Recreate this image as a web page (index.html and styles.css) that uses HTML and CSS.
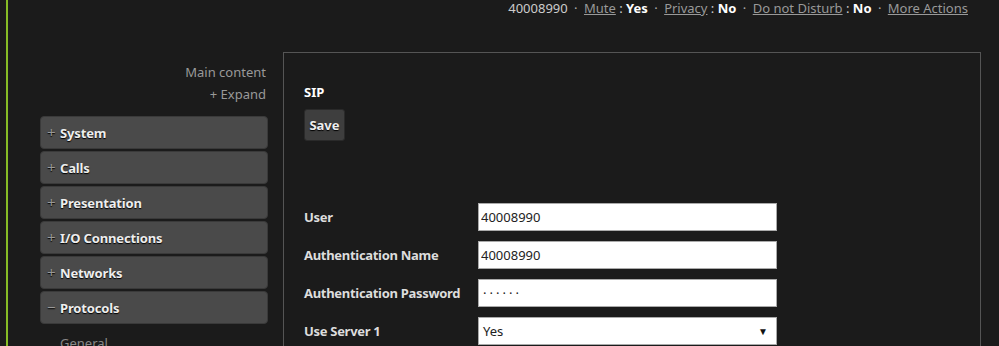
FILE: index.html
```html
<!DOCTYPE html>
<html lang="en">
<head>
  <meta charset="UTF-8" />
  <title>SIP – Configuration</title>
  <link rel="stylesheet" href="styles.css">
</head>
<body>

<div class="pagina">
  <div class="barra-estado">
    <span class="num">40008990</span>
    <span class="sep">·</span>
    <a href="#">Mute</a> : <b>Yes</b>
    <span class="sep">·</span>
    <a href="#">Privacy</a> : <b>No</b>
    <span class="sep">·</span>
    <a href="#">Do not Disturb</a> : <b>No</b>
    <span class="sep">·</span>
    <a href="#">More Actions</a>
  </div>

  <div class="contenedor">
    <aside class="lateral">
      <div class="enlace">Main content</div>
      <div class="enlace">+ Expand</div>
      <nav class="menu">
        <div class="item"><span class="signo">+</span>System</div>
        <div class="item"><span class="signo">+</span>Calls</div>
        <div class="item"><span class="signo">+</span>Presentation</div>
        <div class="item"><span class="signo">+</span>I/O Connections</div>
        <div class="item"><span class="signo">+</span>Networks</div>
        <div class="item"><span class="signo">−</span>Protocols</div>
        <div class="sub">General</div>
      </nav>
    </aside>

    <main class="panel">
      <h2>SIP</h2>
      <button class="guardar">Save</button>
      <form class="formulario">
        <label>User</label>
        <input type="text" value="40008990">
        <label>Authentication Name</label>
        <input type="text" value="40008990">
        <label>Authentication Password</label>
        <input type="text" class="clave" value="······">
        <label>Use Server 1</label>
        <div class="selector"><span>Yes</span><span class="flecha">▼</span></div>
      </form>
    </main>
  </div>
</div>

</body>
</html>
```

FILE: styles.css
```css
html, body { height: 346px; overflow: hidden; }
body { margin: 0; background: #1b1b1b; font-family: "Noto Sans", "Open Sans", sans-serif; font-size: 13px; color: #ddd; }
.pagina { margin-left: 6px; border-left: 2px solid #86bc25; height: 346px; overflow: hidden; }
.barra-estado { text-align: right; padding: 1px 31px 0 0; line-height: 14px; color: #ccc; }
.barra-estado a { color: #999; }
.barra-estado b { color: #fff; }
.barra-estado .sep { color: #aaa; margin: 0 3px; }
.contenedor { display: flex; margin-top: 37px; }
.lateral { width: 228px; margin-left: 32px; padding-top: 9px; }
.enlace { text-align: right; color: #999; line-height: 22px; margin-right: 2px; }
.menu { margin-top: 11px; }
.item { background: #4a4a4a; border: 1px solid #3a3a3a; border-radius: 4px; height: 31px; line-height: 31px; margin-bottom: 2px; color: #eee; font-weight: bold; letter-spacing: -0.15px; text-shadow: 0 1px 1px #000; }
.signo { color: #999; display: inline-block; width: 13px; margin-left: 6px; font-size: 15px; font-weight: normal; }
.sub { color: #888; padding-left: 20px; margin-top: 10px; }
.panel { width: 676px; height: 300px; margin-left: 15px; border: 1px solid #555; padding: 0 0 0 20px; }
.panel h2 { font-size: 13px; margin: 30px 0 8px; color: #fff; }
.guardar { background: #3e3e3e; border: 1px solid #2a2a2a; border-radius: 3px; color: #eee; font-family: inherit; font-size: 13px; font-weight: bold; width: 41px; height: 32px; padding: 0; text-shadow: 0 1px 1px #000; }
.formulario { display: grid; grid-template-columns: 174px 299px; row-gap: 10px; margin-top: 62px; align-items: center; }
.formulario label { font-weight: bold; color: #ddd; letter-spacing: -0.3px; }
.formulario input, .selector { height: 28px; box-sizing: border-box; border: 1px solid #aaa; background: #fff; font-family: inherit; font-size: 13px; padding: 0 2px; color: #222; margin: 0; }
.clave { letter-spacing: 3px; padding-left: 4px !important; }
.selector { display: flex; justify-content: space-between; align-items: center; padding: 0 8px 0 4px; }
.flecha { font-size: 10px; color: #111; }
```
